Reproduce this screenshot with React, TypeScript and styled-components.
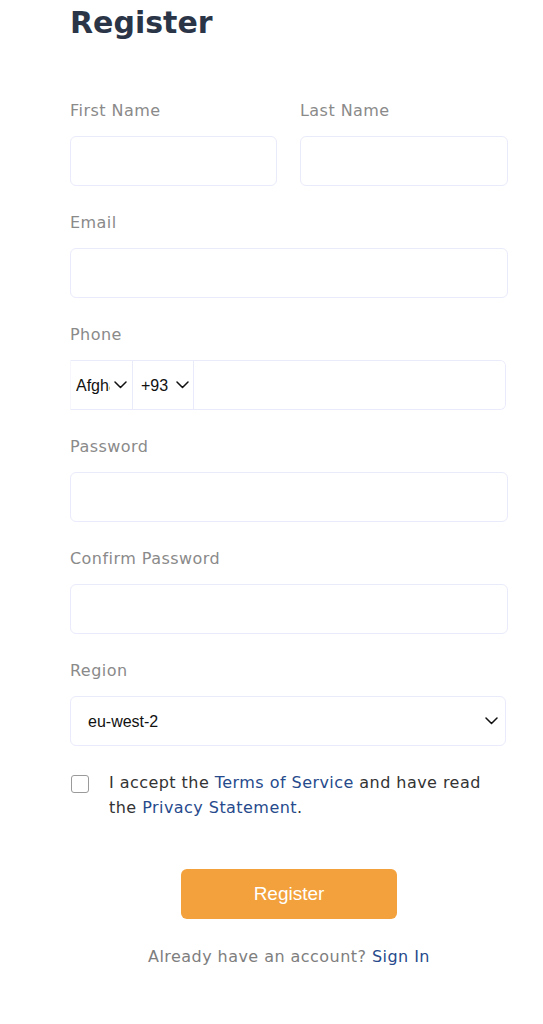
import React, { useState } from 'react';
import styled, { createGlobalStyle } from 'styled-components';

const GlobalStyle = createGlobalStyle`
  body {
    margin: 0;
    background: #ffffff;
    font-family: "DejaVu Sans", "Open Sans", sans-serif;
  }
`;

const BORDER = '#e9ebfb';

const Page = styled.div`
  width: 438px;
  padding: 0 0 40px 70px;
  letter-spacing: 0.45px;
`;

const Title = styled.h1`
  margin: 0 0 53px 0;
  font-size: 30px;
  line-height: 46px;
  font-weight: 700;
  letter-spacing: 0;
  color: #2b3548;
`;

const Form = styled.form`
  display: flex;
  flex-direction: column;
  gap: 25px;
`;

const Row = styled.div`
  display: grid;
  grid-template-columns: 207px 208px;
  column-gap: 23px;
`;

const Field = styled.div`
  display: flex;
  flex-direction: column;
  gap: 13px;
`;

const Label = styled.label`
  font-size: 16px;
  line-height: 24px;
  color: #8a8a8a;
`;

const Input = styled.input`
  box-sizing: border-box;
  height: 50px;
  width: 100%;
  border: 1px solid ${BORDER};
  border-radius: 6px;
  padding: 0 14px;
  font-size: 16px;
  font-family: inherit;
  background: #fff;
  outline: none;
`;

const PhoneBox = styled.div`
  box-sizing: border-box;
  height: 50px;
  width: 436px;
  display: flex;
  border: 1px solid ${BORDER};
  border-left-color: #f6f7fd;
  border-radius: 0 6px 6px 0;
  overflow: hidden;
`;

const SelectWrap = styled.div<{ $width: number }>`
  position: relative;
  flex: 0 0 ${p => p.$width}px;
  border-right: 1px solid ${BORDER};
`;

const NativeSelect = styled.select<{ $pad: number }>`
  appearance: none;
  -webkit-appearance: none;
  box-sizing: border-box;
  width: 100%;
  height: 100%;
  border: none;
  background: transparent;
  padding: 0 22px 0 ${p => p.$pad}px;
  font-family: "Liberation Sans", Arial, sans-serif;
  font-size: 16px;
  letter-spacing: 0;
  color: #111;
  outline: none;
`;

const Chevron = styled.svg<{ $right: number }>`
  position: absolute;
  right: ${p => p.$right}px;
  top: 50%;
  margin-top: -4px;
  width: 13px;
  height: 8px;
  pointer-events: none;
`;

const PhoneInput = styled.input`
  flex: 1;
  border: none;
  outline: none;
  font-size: 16px;
  padding: 0 12px;
`;

const RegionBox = styled.div`
  position: relative;
  box-sizing: border-box;
  height: 50px;
  width: 436px;
  border: 1px solid ${BORDER};
  border-radius: 6px;
`;

const CheckRow = styled.label`
  display: flex;
  align-items: flex-start;
  gap: 20px;
  margin-top: -1px;
  font-size: 16px;
  line-height: 25px;
  color: #333333;
`;

const CheckText = styled.span`
  max-width: 385px;
`;

const Box = styled.input`
  appearance: none;
  -webkit-appearance: none;
  flex: 0 0 auto;
  width: 18px;
  height: 18px;
  margin: 5px 0 0 1px;
  border: 1px solid #9a9a9a;
  border-radius: 3px;
  background: #fff;
`;

const Link = styled.a`
  color: #264a8c;
  text-decoration: none;
`;

const Actions = styled.div`
  display: flex;
  flex-direction: column;
  align-items: center;
  gap: 26px;
  margin-top: 49px;
`;

const SubmitButton = styled.button`
  width: 216px;
  height: 50px;
  border: none;
  border-radius: 6px;
  background: #f2a13c;
  color: #ffffff;
  font-family: "Liberation Sans", Arial, sans-serif;
  font-size: 19px;
  cursor: pointer;
`;

const Footer = styled.div`
  font-size: 16px;
  line-height: 24px;
  color: #7e7e7e;
`;

function ChevronIcon({ right }: { right: number }) {
  return (
    <Chevron $right={right} viewBox="0 0 13 8">
      <path d="M1 1l5.5 5.5L12 1" fill="none" stroke="#111" strokeWidth="1.5" strokeLinecap="round" strokeLinejoin="round" />
    </Chevron>
  );
}

export default function App() {
  const [accepted, setAccepted] = useState(false);

  return (
    <Page>
      <GlobalStyle />
      <Title>Register</Title>
      <Form onSubmit={e => e.preventDefault()}>
        <Row>
          <Field>
            <Label>First Name</Label>
            <Input type="text" />
          </Field>
          <Field>
            <Label>Last Name</Label>
            <Input type="text" />
          </Field>
        </Row>

        <Field>
          <Label>Email</Label>
          <Input type="email" />
        </Field>

        <Field>
          <Label>Phone</Label>
          <PhoneBox>
            <SelectWrap $width={61}>
              <NativeSelect $pad={5} defaultValue="AF">
                <option value="AF">Afghanistan</option>
              </NativeSelect>
              <ChevronIcon right={5} />
            </SelectWrap>
            <SelectWrap $width={60}>
              <NativeSelect $pad={8} defaultValue="93">
                <option value="93">+93</option>
              </NativeSelect>
              <ChevronIcon right={4} />
            </SelectWrap>
            <PhoneInput type="tel" />
          </PhoneBox>
        </Field>

        <Field>
          <Label>Password</Label>
          <Input type="password" />
        </Field>

        <Field>
          <Label>Confirm Password</Label>
          <Input type="password" />
        </Field>

        <Field>
          <Label>Region</Label>
          <RegionBox>
            <NativeSelect $pad={17} defaultValue="eu-west-2">
              <option value="eu-west-2">eu-west-2</option>
            </NativeSelect>
            <ChevronIcon right={7} />
          </RegionBox>
        </Field>

        <CheckRow>
          <Box type="checkbox" checked={accepted} onChange={e => setAccepted(e.target.checked)} />
          <CheckText>
            I accept the <Link href="#">Terms of Service</Link> and have read the{' '}
            <Link href="#">Privacy Statement</Link>.
          </CheckText>
        </CheckRow>
      </Form>

      <Actions>
        <SubmitButton type="button">Register</SubmitButton>
        <Footer>
          Already have an account? <Link href="#">Sign In</Link>
        </Footer>
      </Actions>
    </Page>
  );
}
